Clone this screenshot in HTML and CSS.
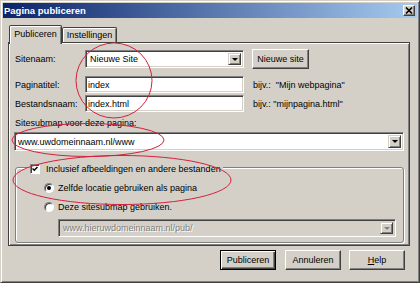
FILE: index.html
```html
<!DOCTYPE html>
<html>
<head>
    <meta charset="utf-8" />
    <link rel="stylesheet" href="styles.css">
</head>
<body>
    <div class="window">
        <div class="caption">
            <span class="caption-title">Pagina publiceren</span>
            <span class="close">
                <svg width="8" height="7" viewBox="0 0 8 7"><path d="M1 0.5 L7 6.5 M7 0.5 L1 6.5" stroke="#000" stroke-width="1.6" fill="none" /></svg>
            </span>
        </div>

        <div class="tabs">
            <div class="tab tab-active">Publiceren</div>
            <div class="tab">Instellingen</div>
        </div>

        <div class="page">
            <div class="row row-site">
                <span class="lbl">Sitenaam:</span>
                <div class="combo combo-site">
                    <span class="combo-text">Nieuwe Site</span>
                    <span class="drop"></span>
                </div>
                <button class="btn btn-new">Nieuwe site</button>
            </div>
            <div class="row row-field">
                <span class="lbl">Paginatitel:</span>
                <input class="field" type="text" value="index" />
                <span class="hint">bijv.:&nbsp; "Mijn webpagina"</span>
            </div>
            <div class="row row-field row-tight">
                <span class="lbl">Bestandsnaam:</span>
                <input class="field" type="text" value="index.html" />
                <span class="hint">bijv.: "mijnpagina.html"</span>
            </div>

            <div class="sub-lbl">Sitesubmap voor deze pagina:</div>
            <div class="combo combo-path">
                <span class="combo-text">www.uwdomeinnaam.nl/www</span>
                <span class="drop"></span>
            </div>

            <div class="group">
                <div class="legend">
                    <span class="check">
                        <svg width="6" height="6" viewBox="0 0 6 6"><polyline points="0.5,2.5 2.3,4.3 5.5,1" stroke="#000" stroke-width="1.5" fill="none" /></svg>
                    </span>
                    <span>Inclusief afbeeldingen en andere bestanden</span>
                </div>
                <div class="opt">
                    <span class="radio radio-on"></span>
                    <span>Zelfde locatie gebruiken als pagina</span>
                </div>
                <div class="opt">
                    <span class="radio"></span>
                    <span>Deze sitesubmap gebruiken.</span>
                </div>
                <div class="combo combo-off">
                    <span class="combo-text">www.hieruwdomeinnaam.nl/pub/</span>
                    <span class="drop"></span>
                </div>
            </div>
        </div>

        <div class="footer">
            <button class="btn btn-default">Publiceren</button>
            <button class="btn">Annuleren</button>
            <button class="btn"><span class="key">H</span>elp</button>
        </div>
    </div>

    <!-- red marker circles drawn over the dialog -->
    <svg class="marks" width="420" height="283" viewBox="0 0 420 283">
        <ellipse cx="114" cy="80.5" rx="38" ry="37.5" />
        <ellipse cx="88" cy="140" rx="76" ry="16.5" />
        <ellipse cx="122" cy="180" rx="109" ry="24.5" />
    </svg>
</body>
</html>
```

FILE: styles.css
```css
body {
    margin: 0;
    background-color: #d4d0c8;
    font-family: "Liberation Sans", Arial, sans-serif;
    font-size: 9px;
    color: #000;
}

.window {
    width: 420px;
    height: 283px;
    box-sizing: border-box;
    padding: 2px;
    border: 1px solid;
    border-color: #d4d0c8 #404040 #404040 #d4d0c8;
    box-shadow: inset 1px 1px #fff, inset -1px -1px #808080;
}

.caption {
    display: flex;
    align-items: center;
    height: 15px;
    padding: 0 2px 0 1px;
    background: linear-gradient(to right, #0a246a, #a6caf0);
}

.caption-title {
    color: #fff;
    font-weight: bold;
    font-size: 9.5px;
}

.close {
    display: flex;
    align-items: center;
    justify-content: center;
    margin-left: auto;
    width: 12px;
    height: 11px;
    box-sizing: border-box;
    border: 1px solid;
    border-color: #fff #404040 #404040 #fff;
    box-shadow: inset -1px -1px #808080;
    background-color: #d4d0c8;
}

/* tabs */
.tabs {
    display: flex;
    align-items: flex-end;
    margin-top: 7px;
    padding-left: 6px;
}

.tab {
    box-sizing: border-box;
    width: 55px;
    height: 15px;
    border: 1px solid #404040;
    border-bottom: 0;
    border-radius: 2px 2px 0 0;
    box-shadow: inset 1px 1px #fff, inset -1px 0 #808080;
    text-align: center;
    line-height: 14px;
}

.tab-active {
    position: relative;
    z-index: 1;
    width: 53px;
    height: 19px;
    margin-bottom: -2px;
    background-color: #d4d0c8;
    line-height: 16px;
}

.page {
    box-sizing: border-box;
    width: 402px;
    height: 204px;
    margin-left: 5px;
    padding: 6px 5px 0;
    border: 1px solid #404040;
    box-shadow: inset 1px 1px #fff, inset -1px -1px #808080;
}

/* form rows */
.row {
    display: flex;
    align-items: center;
}

.row-site {
    height: 20px;
}

.row-field {
    height: 17px;
    margin-top: 7px;
}

.row-tight {
    margin-top: 2px;
}

.lbl {
    flex: none;
    box-sizing: border-box;
    width: 71px;
    padding-left: 1px;
}

.hint {
    margin-left: 9px;
    white-space: nowrap;
}

.sub-lbl {
    margin-top: 5px;
    padding-left: 1px;
    line-height: 12px;
}

.field {
    box-sizing: border-box;
    width: 159px;
    height: 17px;
    margin: 0;
    padding: 0 1px 0 2px;
    border: 1px solid;
    border-color: #808080 #fff #fff #808080;
    box-shadow: inset 1px 1px #404040, inset -1px -1px #d4d0c8;
    background-color: #fff;
    font: inherit;
    color: #000;
    outline: none;
}

.combo {
    box-sizing: border-box;
    display: flex;
    align-items: center;
    padding: 2px;
    border: 1px solid;
    border-color: #808080 #fff #fff #808080;
    box-shadow: inset 1px 1px #404040, inset -1px -1px #d4d0c8;
    background-color: #fff;
}

.combo-text {
    flex: 1;
    padding-left: 1px;
    white-space: nowrap;
    overflow: hidden;
}

.combo-site {
    flex: none;
    width: 159px;
    height: 18px;
}

.combo-site .combo-text {
    padding-left: 2px;
}

.combo-path {
    height: 19px;
    margin-top: 3px;
}

.combo-off {
    width: 338px;
    height: 18px;
    margin: 6px 0 0 42px;
    background-color: #d4d0c8;
}

.combo-off .combo-text {
    padding-left: 2px;
    color: #808080;
    text-shadow: 1px 1px #fff;
}

.drop {
    flex: none;
    align-self: stretch;
    display: flex;
    align-items: center;
    justify-content: center;
    box-sizing: border-box;
    width: 13px;
    border: 1px solid;
    border-color: #d4d0c8 #404040 #404040 #d4d0c8;
    box-shadow: inset 1px 1px #fff, inset -1px -1px #808080;
    background-color: #d4d0c8;
}

.drop::after {
    content: "";
    border-left: 3px solid transparent;
    border-right: 3px solid transparent;
    border-top: 3px solid #000;
}

.combo-off .drop::after {
    border-top-color: #808080;
}

/* buttons */
.btn {
    box-sizing: border-box;
    height: 20px;
    margin: 0;
    padding: 0;
    border: 1px solid;
    border-color: #fff #404040 #404040 #fff;
    box-shadow: inset -1px -1px #808080;
    background-color: #d4d0c8;
    font: inherit;
    color: #000;
}

.btn-new {
    width: 57px;
    margin-left: 8px;
}

.btn-default {
    margin-right: 1px;
    border-color: #000;
    box-shadow: inset 1px 1px #fff, inset -1px -1px #404040, inset -2px -2px #808080;
}

.key {
    text-decoration: underline;
}

.footer {
    display: flex;
    justify-content: flex-end;
    gap: 8px;
    margin-top: 4px;
    padding-right: 12px;
}

.footer .btn {
    width: 56px;
}

/* group box */
.group {
    box-sizing: border-box;
    height: 76px;
    margin: 16px 0 0 1px;
    border: 1px solid #808080;
    border-radius: 3px;
    box-shadow: inset 1px 1px #fff, 1px 1px #fff;
}

.legend {
    display: flex;
    align-items: center;
    gap: 6px;
    width: fit-content;
    height: 12px;
    margin: -5px 0 0 12px;
    padding: 0 2px;
    background-color: #d4d0c8;
}

.opt {
    display: flex;
    align-items: center;
    gap: 4px;
    height: 12px;
    margin: 7px 0 0 28px;
}

.check {
    display: flex;
    align-items: center;
    justify-content: center;
    box-sizing: border-box;
    width: 10px;
    height: 10px;
    border: 1px solid;
    border-color: #808080 #fff #fff #808080;
    box-shadow: inset 1px 1px #404040;
    background-color: #fff;
}

.radio {
    display: flex;
    align-items: center;
    justify-content: center;
    box-sizing: border-box;
    width: 10px;
    height: 10px;
    border-radius: 50%;
    border: 1px solid;
    border-color: #808080 #fff #fff #808080;
    box-shadow: inset 1px 1px #404040;
    background-color: #fff;
}

.radio-on::after {
    content: "";
    width: 4px;
    height: 4px;
    border-radius: 50%;
    background-color: #000;
}

.marks {
    position: absolute;
    top: 0;
    left: 0;
    pointer-events: none;
}

.marks ellipse {
    fill: none;
    stroke: #d4203c;
    stroke-width: 1;
}
```
